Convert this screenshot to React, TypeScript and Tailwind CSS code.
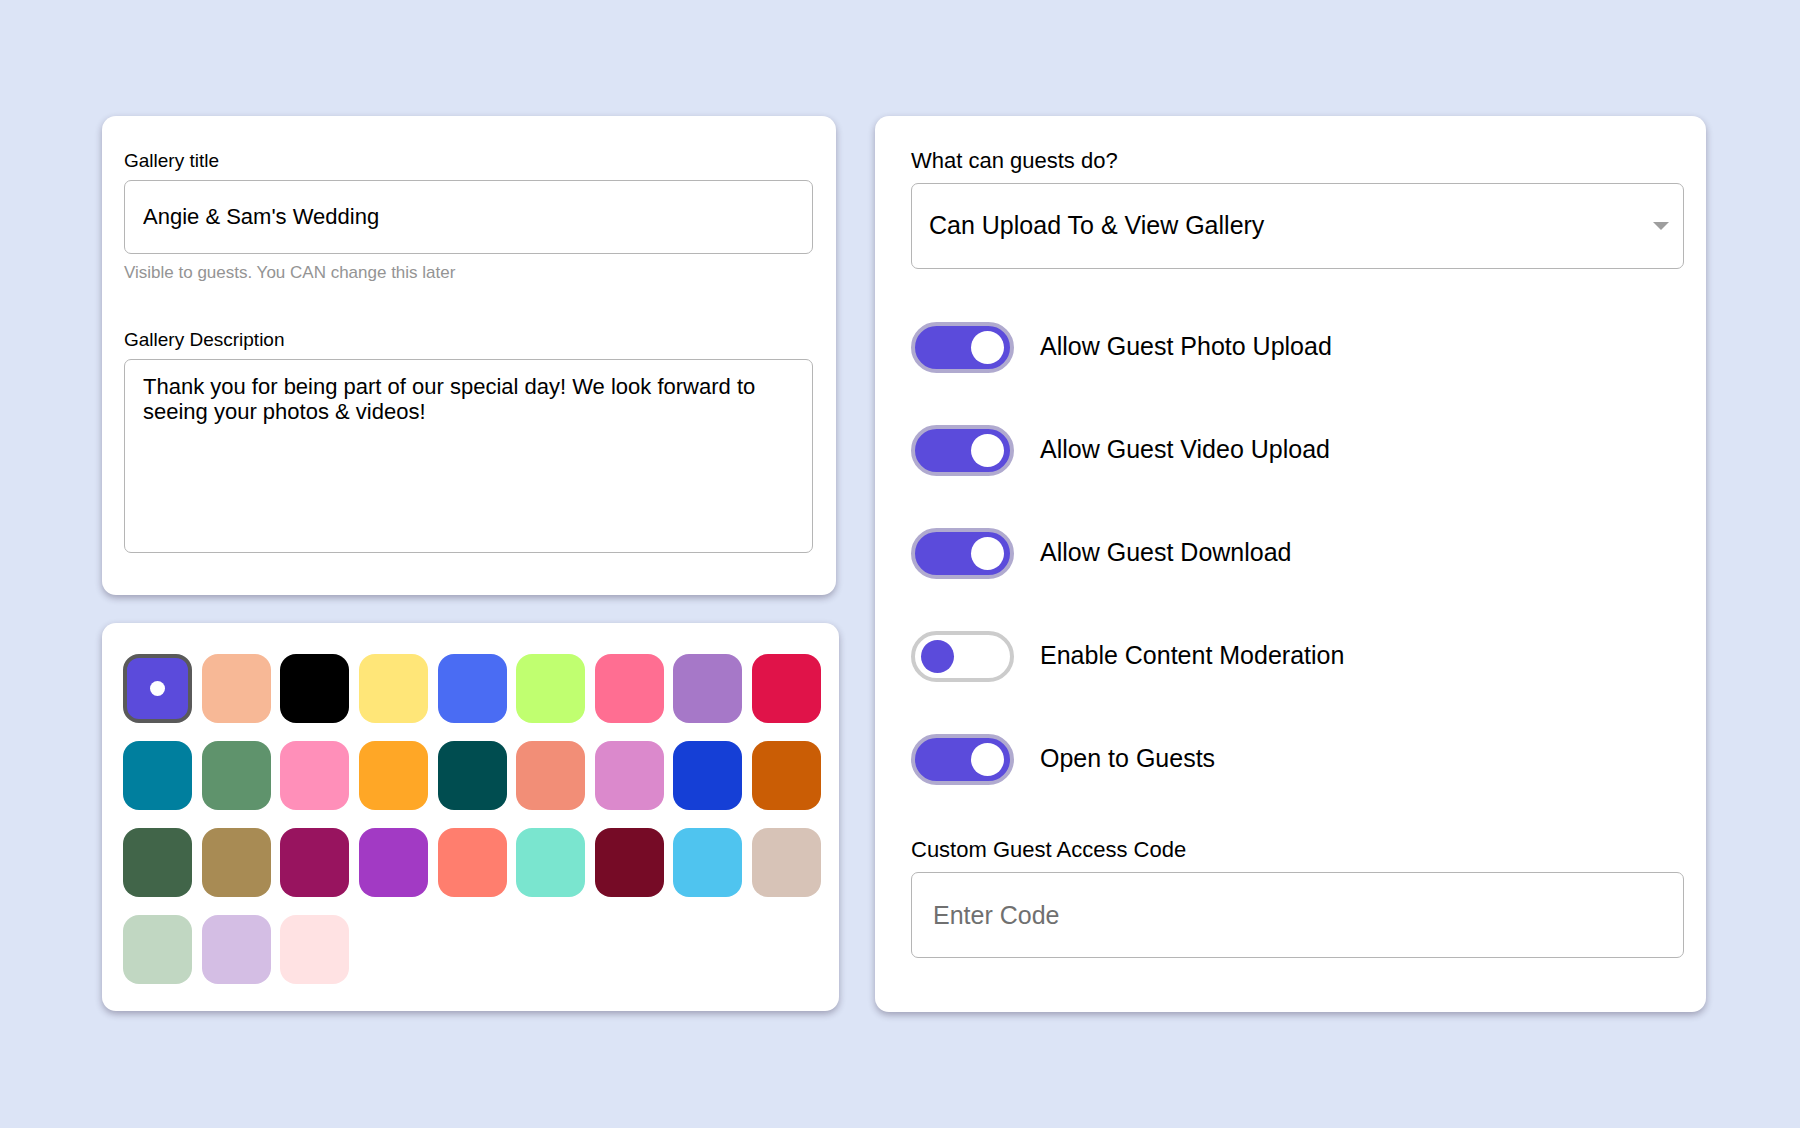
import { useState } from 'react';
import clsx from 'clsx';

const swatches = [
  { name: 'Indigo', color: 'bg-[#5b4bdb]' },
  { name: 'Peach', color: 'bg-[#f7b896]' },
  { name: 'Black', color: 'bg-[#000000]' },
  { name: 'Butter', color: 'bg-[#ffe678]' },
  { name: 'Cornflower', color: 'bg-[#4a6cf3]' },
  { name: 'Lime', color: 'bg-[#c0ff70]' },
  { name: 'Rose', color: 'bg-[#ff6e92]' },
  { name: 'Amethyst', color: 'bg-[#a678c8]' },
  { name: 'Crimson', color: 'bg-[#e01349]' },
  { name: 'Teal', color: 'bg-[#007f9e]' },
  { name: 'Fern', color: 'bg-[#5f936c]' },
  { name: 'Pink', color: 'bg-[#ff8fb9]' },
  { name: 'Orange', color: 'bg-[#ffa726]' },
  { name: 'Deep teal', color: 'bg-[#004d50]' },
  { name: 'Salmon', color: 'bg-[#f28e77]' },
  { name: 'Orchid', color: 'bg-[#db89cc]' },
  { name: 'Royal blue', color: 'bg-[#153fd6]' },
  { name: 'Burnt orange', color: 'bg-[#ca5d05]' },
  { name: 'Forest', color: 'bg-[#416549]' },
  { name: 'Bronze', color: 'bg-[#a88b54]' },
  { name: 'Berry', color: 'bg-[#98145f]' },
  { name: 'Purple', color: 'bg-[#a23ac4]' },
  { name: 'Coral', color: 'bg-[#ff7e6e]' },
  { name: 'Mint', color: 'bg-[#7ae5cf]' },
  { name: 'Burgundy', color: 'bg-[#760b26]' },
  { name: 'Sky', color: 'bg-[#4fc4ef]' },
  { name: 'Sand', color: 'bg-[#d7c3b7]' },
  { name: 'Sage', color: 'bg-[#c1d7c2]' },
  { name: 'Lavender', color: 'bg-[#d4bee4]' },
  { name: 'Blush', color: 'bg-[#ffe2e3]' },
];

const permissions = [
  { id: 'photo-upload', label: 'Allow Guest Photo Upload', enabled: true },
  { id: 'video-upload', label: 'Allow Guest Video Upload', enabled: true },
  { id: 'download', label: 'Allow Guest Download', enabled: true },
  { id: 'moderation', label: 'Enable Content Moderation', enabled: false },
  { id: 'open', label: 'Open to Guests', enabled: true },
];

const card = 'rounded-[14px] bg-white shadow-[0_3px_7px_rgb(30_20_50/0.32)]';
const field = 'w-full rounded-[7px] border border-[#b5b5b5] bg-white text-black outline-none focus:border-[#5b4bdb]';

export default function App() {
  return (
    <main className="grid min-h-screen grid-cols-[737fr_831fr] content-center items-start gap-9 bg-[#dce4f6] pr-[94px] pl-[102px] font-['Liberation_Sans',Arial,sans-serif] text-black">
      <div className="flex flex-col gap-7">
        <GalleryDetails />
        <ColorPicker />
      </div>
      <GuestSettings />
    </main>
  );
}

function GalleryDetails() {
  return (
    <section className={clsx(card, 'mr-[3px] flex flex-col pt-[33px] pr-[23px] pb-[42px] pl-[22px]')}>
      <label htmlFor="title" className="mb-[7px] text-[19px] leading-6">
        Gallery title
      </label>
      <input
        id="title"
        type="text"
        defaultValue="Angie & Sam's Wedding"
        aria-describedby="title-hint"
        className={clsx(field, 'h-[74px] px-[18px] text-[22px]')}
      />
      <p id="title-hint" className="mt-[7px] text-[17px] leading-6 text-[#949494]">
        Visible to guests. You CAN change this later
      </p>

      <label htmlFor="description" className="mt-[43px] mb-[7px] text-[19px] leading-6">
        Gallery Description
      </label>
      <textarea
        id="description"
        defaultValue="Thank you for being part of our special day! We look forward to seeing your photos & videos!"
        className={clsx(field, 'h-[194px] resize-none px-[18px] py-[14px] text-[22px] leading-[25px]')}
      />
    </section>
  );
}

function ColorPicker() {
  const [selected, setSelected] = useState('Indigo');

  return (
    <section
      role="radiogroup"
      aria-label="Gallery color"
      className={clsx(
        card,
        'grid grid-cols-[repeat(9,69px)] justify-between gap-y-[18px] pt-[31px] pr-[18px] pb-[27px] pl-[21px]',
      )}
    >
      {swatches.map((swatch) => (
        <input
          key={swatch.name}
          type="radio"
          name="color"
          aria-label={swatch.name}
          checked={selected === swatch.name}
          onChange={() => setSelected(swatch.name)}
          className={clsx(
            'grid size-[69px] cursor-pointer appearance-none place-items-center rounded-[16px] border-[#5a5a5a] checked:border-4 checked:before:size-[15px] checked:before:rounded-full checked:before:bg-white',
            swatch.color,
          )}
        />
      ))}
    </section>
  );
}

function GuestSettings() {
  return (
    <section className={clsx(card, 'flex flex-col pt-[31px] pr-[22px] pb-[54px] pl-9')}>
      <label htmlFor="access" className="mb-2 text-[22px] leading-7">
        What can guests do?
      </label>
      <div className="relative">
        <select id="access" className={clsx(field, 'block h-[86px] appearance-none px-[17px] text-[25px]')}>
          <option>Can Upload To & View Gallery</option>
          <option>Can View Gallery Only</option>
          <option>Can Upload Only</option>
        </select>
        <svg
          viewBox="0 0 16 8"
          className="pointer-events-none absolute top-1/2 right-[15px] h-2 w-4 -translate-y-1/2 fill-[#9e9e9e]"
          aria-hidden="true"
        >
          <path d="M0 0h16L8 8z" />
        </svg>
      </div>

      <div className="mt-[53px] mb-[51px] flex flex-col gap-[52px]">
        {permissions.map((permission) => (
          <Toggle key={permission.id} {...permission} />
        ))}
      </div>

      <label htmlFor="code" className="mb-2 text-[22px] leading-7">
        Custom Guest Access Code
      </label>
      <input
        id="code"
        type="text"
        placeholder="Enter Code"
        className={clsx(field, 'h-[86px] px-[21px] text-[25px] placeholder:text-[#707070]')}
      />
    </section>
  );
}

function Toggle({ id, label, enabled }: { id: string; label: string; enabled: boolean }) {
  return (
    <div className="flex items-center gap-[26px]">
      <input
        id={id}
        type="checkbox"
        role="switch"
        defaultChecked={enabled}
        className="flex h-[51px] w-[103px] shrink-0 cursor-pointer appearance-none items-center rounded-full border-4 border-[#cccccc] bg-white px-[6px] before:size-[33px] before:rounded-full before:bg-[#5b4bdb] checked:justify-end checked:border-[#b0aacf] checked:bg-[#5b4bdb] checked:before:bg-white"
      />
      <label htmlFor={id} className="cursor-pointer pb-[3px] text-[25px] leading-[30px]">
        {label}
      </label>
    </div>
  );
}
